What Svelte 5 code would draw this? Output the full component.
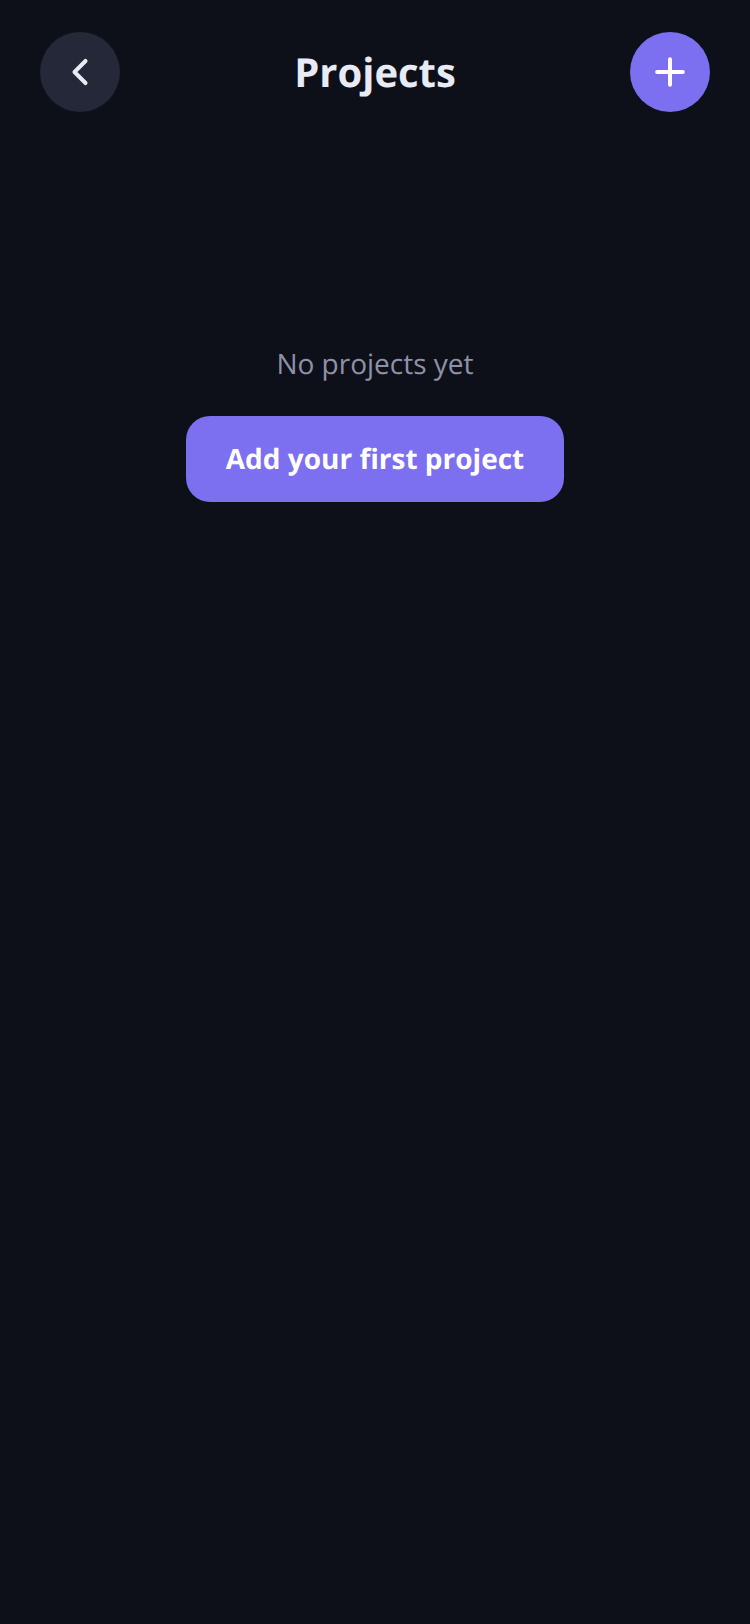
<script lang="ts">
  let { onback = () => {}, onadd = () => {} } = $props();
</script>

<div class="page">
  <header>
    <button class="round" aria-label="Back" onclick={onback}>
      <svg width="44" height="44" viewBox="0 0 24 24">
        <path d="M15 18l-6-6 6-6" />
      </svg>
    </button>
    <h1>Projects</h1>
    <button class="round add" aria-label="Add project" onclick={onadd}>
      <svg width="44" height="44" viewBox="0 0 24 24">
        <path d="M12 5v14M5 12h14" />
      </svg>
    </button>
  </header>

  <main>
    <p>No projects yet</p>
    <button class="primary" onclick={onadd}>Add your first project</button>
  </main>
</div>

<style>
  :global(body) {
    background: #0d1018;
  }

  .page {
    min-height: 100vh;
    font-family: 'Open Sans', 'Noto Sans', sans-serif;
    text-rendering: geometricPrecision;
    color: #e8eaf6;
  }

  header {
    display: flex;
    align-items: center;
    justify-content: space-between;
    padding: 32px 40px;
  }

  h1 {
    margin: 0;
    font-size: 40px;
    font-weight: 700;
    line-height: 56px;
  }

  button {
    border: none;
    font-family: inherit;
    text-rendering: inherit;
    cursor: pointer;
  }

  .round {
    display: flex;
    align-items: center;
    justify-content: center;
    width: 80px;
    height: 80px;
    padding: 0;
    border-radius: 50%;
    background: #252838;
    color: inherit;
  }

  .add {
    background: #7c6ff0;
    color: #fff;
  }

  svg {
    fill: none;
    stroke: currentColor;
    stroke-width: 2.2;
    stroke-linecap: round;
    stroke-linejoin: round;
  }

  main {
    display: flex;
    flex-direction: column;
    align-items: center;
    gap: 32px;
    padding: 200px 40px 40px;
  }

  p {
    margin: 0;
    font-size: 28px;
    line-height: 40px;
    color: #9090a8;
  }

  .primary {
    padding: 24px 40px;
    border-radius: 24px;
    background: #7c6ff0;
    color: #fff;
    font-size: 28px;
    font-weight: 700;
    line-height: 38px;
  }
</style>
